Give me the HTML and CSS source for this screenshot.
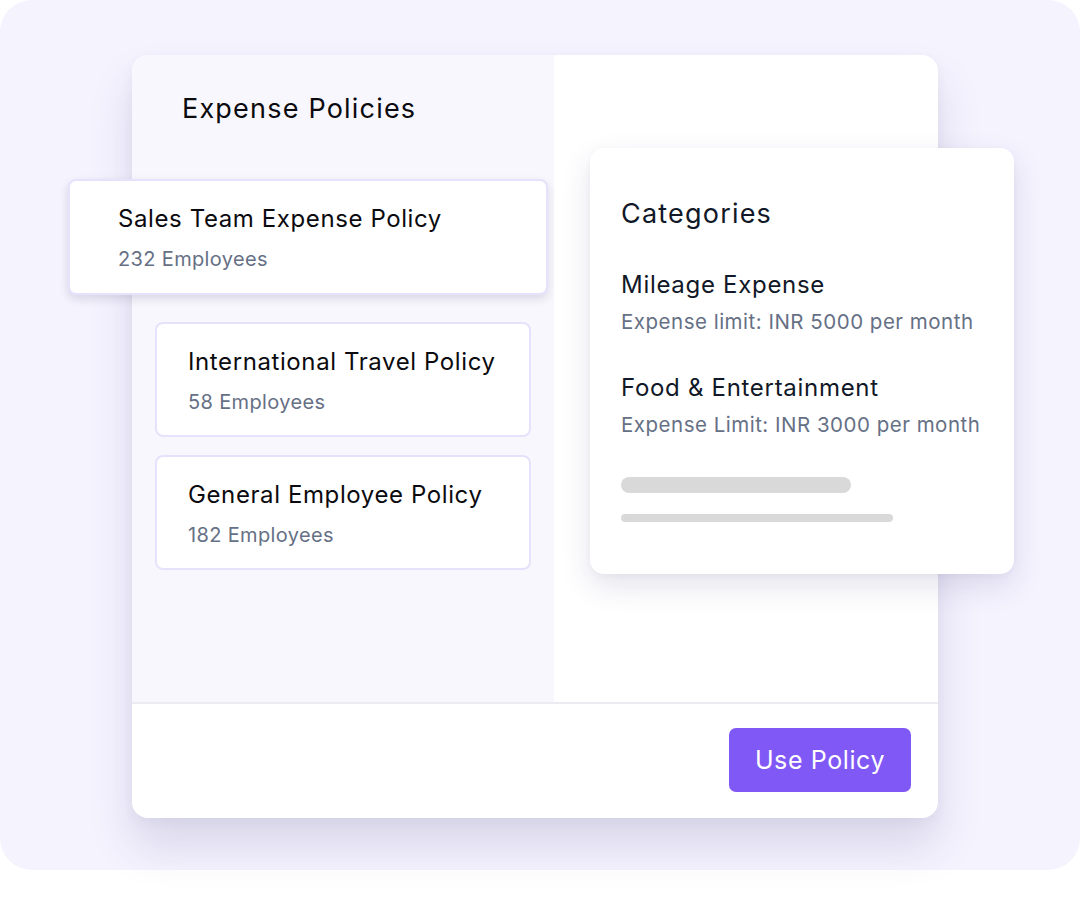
FILE: index.html
```html
<!DOCTYPE html>
<html lang="en">
<head>
<meta charset="utf-8">
<title>Expense Policies</title>
<link rel="stylesheet" href="styles.css">
</head>
<body>
<div class="stage">
  <div class="window">
    <div class="window-body">
      <section class="policies">
        <h1 class="policies-title">Expense Policies</h1>
        <div class="policy-card policy-card--selected">
          <div class="policy-name">Sales Team Expense Policy</div>
          <div class="policy-count">232 Employees</div>
        </div>
        <div class="policy-list">
          <div class="policy-card">
            <div class="policy-name">International Travel Policy</div>
            <div class="policy-count">58 Employees</div>
          </div>
          <div class="policy-card">
            <div class="policy-name">General Employee Policy</div>
            <div class="policy-count">182 Employees</div>
          </div>
        </div>
      </section>
      <section class="detail"></section>
    </div>
    <footer class="window-footer">
      <button class="btn-primary">Use Policy</button>
    </footer>
    <div class="categories">
      <h2 class="categories-title">Categories</h2>
      <div class="category">
        <div class="category-name">Mileage Expense</div>
        <div class="category-limit">Expense limit: INR 5000 per month</div>
      </div>
      <div class="category">
        <div class="category-name">Food &amp; Entertainment</div>
        <div class="category-limit">Expense Limit: INR 3000 per month</div>
      </div>
      <div class="skeleton skeleton--thick"></div>
      <div class="skeleton skeleton--thin"></div>
    </div>
  </div>
</div>
</body>
</html>
```
FILE: styles.css
```css
* { box-sizing: border-box; }
html, body { margin: 0; padding: 0; background: #ffffff; }
body {
  font-family: Inter, "Noto Sans", "Liberation Sans", sans-serif;
  width: 1080px;
  height: 906px;
  overflow: hidden;
}
.stage {
  width: 1080px;
  height: 870px;
  background: #f5f3fe;
  border-radius: 32px;
  padding: 55px 0 0 132px;
}
.window {
  position: relative;
  width: 806px;
  height: 763px;
  background: #ffffff;
  border-radius: 16px;
  display: flex;
  flex-direction: column;
  box-shadow: 0 28px 44px rgba(60, 52, 120, 0.15), 0 4px 12px rgba(60, 52, 120, 0.05);
}
.window-body {
  display: flex;
  height: 647px;
}
.policies {
  width: 422px;
  background: #f8f7fd;
  border-top-left-radius: 16px;
  padding-top: 36px;
}
.policies-title {
  margin: 0 0 0 50px;
  font-size: 27px;
  font-weight: 400;
  line-height: 36px;
  letter-spacing: 1.2px;
  color: #0b0b0f;
}
.detail { flex: 1; }
.policy-card {
  background: #ffffff;
  border: 2px solid #e6e2fb;
  border-radius: 8px;
  padding: 22px 30px 18px 31px;
  height: 115px;
}
.policy-card--selected {
  margin: 52px 0 0 -64px;
  width: 480px;
  height: 116px;
  padding-left: 48px;
  box-shadow: 0 4px 10px rgba(40, 30, 80, 0.14);
}
.policy-list {
  margin: 27px 0 0 23px;
  width: 376px;
  display: flex;
  flex-direction: column;
  gap: 18px;
}
.policy-name {
  font-size: 24px;
  line-height: 32px;
  letter-spacing: 0.6px;
  color: #0b0b0f;
}
.policy-count {
  margin-top: 10px;
  font-size: 20px;
  line-height: 28px;
  letter-spacing: 0.35px;
  color: #667085;
}
.window-footer {
  flex: 1;
  border-top: 2px solid #ecebf2;
  border-bottom-left-radius: 16px;
  border-bottom-right-radius: 16px;
  display: flex;
  justify-content: flex-end;
  align-items: center;
  padding: 0 27px 2px 0;
}
.btn-primary {
  width: 182px;
  height: 64px;
  border: 0;
  border-radius: 7px;
  background: #7f58f5;
  color: #ffffff;
  font-family: inherit;
  font-size: 25px;
  font-weight: 400;
  letter-spacing: 0.6px;
}
.categories {
  position: absolute;
  left: 458px;
  top: 93px;
  width: 424px;
  height: 426px;
  background: #ffffff;
  border-radius: 14px;
  padding: 48px 32px 0 31px;
  box-shadow: 0 12px 30px rgba(50, 40, 110, 0.13), 0 2px 6px rgba(50, 40, 110, 0.04);
}
.categories-title {
  margin: 0;
  font-size: 27px;
  font-weight: 400;
  line-height: 36px;
  letter-spacing: 1.2px;
  color: #111827;
}
.category { margin-top: 37px; }
.category + .category { margin-top: 36px; }
.category-name {
  font-size: 24px;
  line-height: 32px;
  letter-spacing: 0.7px;
  color: #111827;
}
.category-limit {
  margin-top: 7px;
  font-size: 20.5px;
  line-height: 28px;
  letter-spacing: 0.5px;
  color: #667085;
}
.skeleton { background: #d9d9d9; }
.skeleton--thick {
  margin-top: 38px;
  width: 230px;
  height: 16px;
  border-radius: 8px;
}
.skeleton--thin {
  margin-top: 21px;
  width: 272px;
  height: 8px;
  border-radius: 4px;
}
```
